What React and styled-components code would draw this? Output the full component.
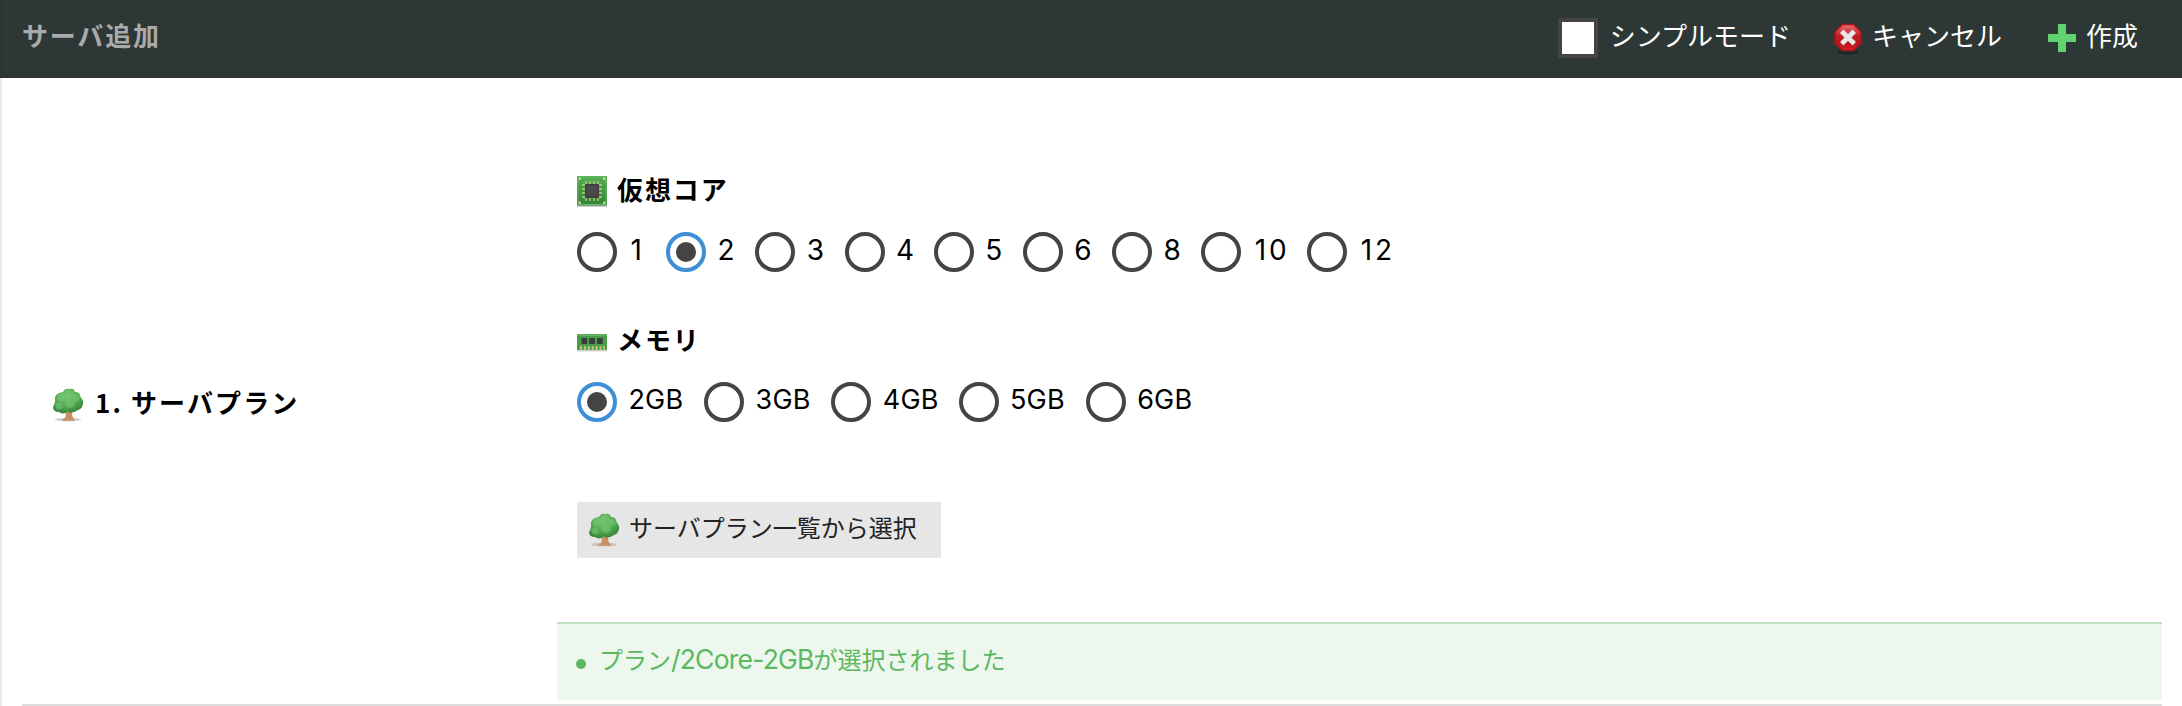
import React, { useState } from 'react';
import styled, { createGlobalStyle } from 'styled-components';

const Global = createGlobalStyle`
  * { box-sizing: border-box; }
  body {
    margin: 0;
    background: #fff;
    color: #000;
    font-family: "Noto Sans CJK JP", sans-serif;
    overflow: hidden;
  }
`;

const Page = styled.div`
  height: 706px;
  display: flex;
  flex-direction: column;
  overflow: hidden;
`;

const Header = styled.header`
  flex: none;
  height: 78px;
  display: flex;
  align-items: flex-start;
  justify-content: space-between;
  padding: 16px 44px 0 20px;
  border-left: 2px solid #2a3532;
  border-bottom: 1px solid #2a3532;
  background: #2d3836;
`;

const Title = styled.h1`
  margin: 0;
  font-size: 26px;
  line-height: 38px;
  font-weight: 700;
  letter-spacing: 1.8px;
  color: #aaa;
`;

const Actions = styled.div`
  display: flex;
`;

const Action = styled.button`
  display: flex;
  align-items: flex-start;
  gap: ${(p) => p.$gap}px;
  margin: 0 0 0 ${(p) => p.$before || 0}px;
  padding: 0;
  border: 0;
  background: none;
  color: #fff;
  font: 26px/38px "Noto Sans CJK JP", sans-serif;
  white-space: nowrap;
`;

const CheckBox = styled.span`
  width: 40px;
  height: 40px;
  margin-top: 2px;
  border: 4px solid #444;
  background: #fff;
`;

const Icon = styled.svg`
  display: block;
  flex: none;
  width: ${(p) => p.$w}px;
  height: ${(p) => p.$h}px;
  margin-top: ${(p) => p.$top || 0}px;
`;

const Body = styled.main`
  flex: 1;
  border-left: 2px solid #ebebeb;
  padding: 0 20px;
`;

const Row = styled.section`
  height: 628px;
  display: flex;
  border-bottom: 2px solid #ddd;
`;

const RowLabel = styled.div`
  width: 535px;
  flex: none;
  display: flex;
  align-items: flex-start;
  gap: 11px;
  padding: 305px 0 0 30px;
  font-size: 26px;
  line-height: 38px;
  font-weight: 700;
  letter-spacing: 2.1px;
`;

const Field = styled.div`
  flex: 1;
  display: flex;
  flex-direction: column;
  padding-top: 92px;
`;

const Group = styled.div`
  height: 150px;
  padding-left: 20px;
`;

const GroupTitle = styled.h2`
  display: flex;
  gap: 10px;
  margin: 0 0 22px;
  height: 40px;
  font-size: 26px;
  line-height: 38px;
  font-weight: 700;
  letter-spacing: 1.9px;
`;

const Radios = styled.div`
  display: flex;
  gap: 20px;
`;

const Option = styled.label`
  display: flex;
  gap: 11.4px;
  font: 400 ${(p) => (p.$digits ? 28 : 27)}px/36px Inter, sans-serif;
  letter-spacing: ${(p) => (p.$digits ? 3 : 0.2)}px;
`;

const OptionText = styled.span`
  width: ${(p) => p.$w}px;
  padding-left: ${(p) => p.$indent}px;
  white-space: nowrap;
`;

const Dot = styled.span`
  width: 40px;
  height: 40px;
  flex: none;
  display: grid;
  place-items: center;
  border: 4px solid ${(p) => (p.$on ? '#3f8fd8' : '#444')};
  border-radius: 50%;
  &::after {
    content: '';
    width: 20px;
    height: 20px;
    border-radius: 50%;
    background: ${(p) => (p.$on ? '#444' : 'transparent')};
  }
`;

const ListButton = styled.button`
  width: 364px;
  height: 56px;
  display: flex;
  gap: 9px;
  margin: 32px 0 64px 20px;
  padding: 0 0 0 11px;
  border: 0;
  background: #e6e6e6;
  color: #222;
  font: 24px/50px "Noto Sans CJK JP", sans-serif;
  white-space: nowrap;
`;

const Notice = styled.div`
  height: 78px;
  display: flex;
  gap: 13px;
  padding-left: 19px;
  border-top: 2px solid #c1e2c2;
  background: #edf7ee;
  color: #5cb860;
  font-size: 24px;
  line-height: 70px;
`;

const Bullet = styled.span`
  width: 10px;
  height: 10px;
  margin-top: 35px;
  border-radius: 50%;
  background: currentColor;
`;

const Latin = styled.span`
  font-family: Inter, sans-serif;
  font-size: 26.5px;
  line-height: 1;
  letter-spacing: -0.8px;
`;

const Tree = ({ top }) => (
  <Icon viewBox="0 0 32 34" $w={32} $h={34} $top={top}>
    <defs>
      <radialGradient id="leaf" cx=".45" cy=".3" r=".75">
        <stop offset="0" stopColor="#79c675" />
        <stop offset=".65" stopColor="#4aa04b" />
        <stop offset="1" stopColor="#2f7c36" />
      </radialGradient>
    </defs>
    <ellipse cx="16" cy="31.5" rx="13" ry="1.7" fill="#999" opacity=".45" />
    <path d="M14 20h6l.3 8 2.8 4.7H9.5l4-3.5z" fill="#c99061" />
    <path d="M17.5 25l5-5" stroke="#b87949" strokeWidth="2" />
    <path d="M7 5Q10 4 11 4Q13 0 17 1Q22 0 23 4Q28 4 28.5 9Q32 13 31 16Q30 21 26 22Q21 26 16 23.5Q11 27 7 24Q1 24 1 19Q3 16 3 13Q2 7 7 5Z" fill="url(#leaf)" />
    <g fill="#74c670" opacity=".6">
      <circle cx="17" cy="5.5" r="4.2" />
      <circle cx="9" cy="9.5" r="4" />
      <circle cx="24" cy="9.5" r="3.8" />
      <circle cx="18" cy="15" r="5" />
      <circle cx="7" cy="18" r="3.5" />
    </g>
  </Icon>
);

const Chip = () => (
  <Icon viewBox="0 0 30 31" $w={30} $h={31} $top={6}>
    <defs>
      <linearGradient id="board" x2="0" y2="1">
        <stop offset="0" stopColor="#57ae57" />
        <stop offset="1" stopColor="#2f8238" />
      </linearGradient>
    </defs>
    <rect y="1" width="30" height="30" fill="#aaa" opacity=".6" />
    <rect width="30" height="29.5" fill="url(#board)" />
    <rect x="1" y="1" width="28" height="27.5" fill="none" stroke="#62b961" />
    {[2.8, 27.2].map((x) => [2.8, 26.7].map((y) => <circle key={`${x}-${y}`} cx={x} cy={y} r="1.3" fill="#d6dc91" />))}
    <g stroke="#c2ce78" strokeWidth="1.3">
      {[9, 13, 17, 21].map((v) => (
        <path key={v} d={`M${v} 5V25M5 ${v}H25`} />
      ))}
    </g>
    <rect x="8" y="8" width="14" height="14" rx="1" fill="#3b3d3d" />
    <rect x="9.5" y="9.5" width="11" height="11" fill="#4a4b4c" />
  </Icon>
);

const Memory = () => (
  <Icon viewBox="0 0 30 18" $w={30} $h={18} $top={14}>
    <rect y="1" width="30" height="16.5" fill="#aaa" opacity=".5" />
    <rect width="30" height="16" rx=".5" fill="#4b9c4c" />
    <rect x=".5" y=".5" width="29" height="1.2" fill="#6dbb6a" />
    {[4.5, 12.3, 20.1].map((x) => (
      <rect key={x} x={x} y="4" width="5.6" height="6" fill="#373d39" />
    ))}
    <path d="M3 14H28" stroke="#c5c877" strokeWidth="3.5" strokeDasharray="2 1.9" />
  </Icon>
);

const Cancel = () => (
  <Icon viewBox="0 0 30 34" $w={30} $h={34} $top={6}>
    <defs>
      <linearGradient id="stop" x2="0" y2="1">
        <stop offset="0" stopColor="#ed6b6c" />
        <stop offset=".45" stopColor="#bd1e25" />
        <stop offset=".7" stopColor="#b5141c" />
        <stop offset="1" stopColor="#dd2027" />
      </linearGradient>
    </defs>
    <ellipse cx="15" cy="30" rx="11" ry="3" fill="#141a19" opacity=".5" />
    <path d="M9.5 2.5h11L28 10v11L20.5 28.5h-11L2 21V10z" fill="url(#stop)" stroke="#a9151c" strokeWidth="1.6" />
    <path d="M8.7 9.2L21.3 21.8M21.3 9.2L8.7 21.8" stroke="#e8e8e8" strokeWidth="4.8" />
  </Icon>
);

const Plus = () => (
  <Icon viewBox="0 0 28 28" $w={28} $h={28} $top={8}>
    <path d="M10 0h8v10h10v8H18v10h-8V18H0v-8h10z" fill="#62d26f" />
  </Icon>
);

const RadioGroup = ({ options, initial, widths, digits }) => {
  const [value, setValue] = useState(initial);
  return (
    <Radios>
      {options.map((o) => (
        <Option key={o} $digits={digits} onClick={() => setValue(o)}>
          <Dot $on={o === value} />
          <OptionText $w={widths(o)} $indent={digits && o[0] === '1' ? 2 : 0}>{o}</OptionText>
        </Option>
      ))}
    </Radios>
  );
};

export default function App() {
  return (
    <Page>
      <Global />
      <Header>
        <Title>サーバ追加</Title>
        <Actions>
          <Action $gap={12}><CheckBox />シンプルモード</Action>
          <Action $gap={9} $before={42}><Cancel />キャンセル</Action>
          <Action $gap={10} $before={46}><Plus />作成</Action>
        </Actions>
      </Header>
      <Body>
        <Row>
          <RowLabel><Tree top={5} />1. サーバプラン</RowLabel>
          <Field>
            <Group>
              <GroupTitle><Chip />仮想コア</GroupTitle>
              <RadioGroup
                digits
                options={['1', '2', '3', '4', '5', '6', '8', '10', '12']}
                initial="2"
                widths={(o) => (o.length === 2 ? 34.6 : 17.8)}
              />
            </Group>
            <Group>
              <GroupTitle><Memory />メモリ</GroupTitle>
              <RadioGroup options={['2GB', '3GB', '4GB', '5GB', '6GB']} initial="2GB" widths={() => 55.8} />
            </Group>
            <ListButton><Tree top={11} />サーバプラン一覧から選択</ListButton>
            <Notice>
              <Bullet />
              <span>プラン<Latin>/2Core-2GB</Latin>が選択されました</span>
            </Notice>
          </Field>
        </Row>
      </Body>
    </Page>
  );
}
